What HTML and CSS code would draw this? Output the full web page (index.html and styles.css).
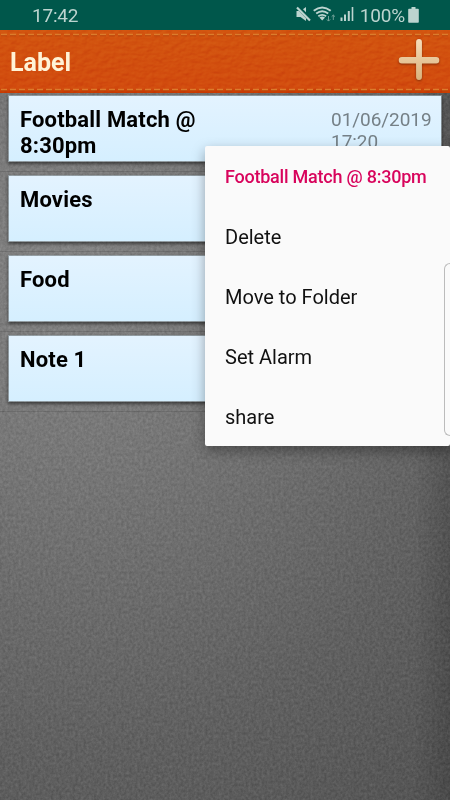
FILE: index.html
```html
<!DOCTYPE html>
<html lang="en">
<head>
<meta charset="utf-8">
<title>Label</title>
<link rel="stylesheet" href="styles.css">
</head>
<body>
<div class="screen">
  <svg class="grain" width="450" height="710" aria-hidden="true">
    <filter id="felt" x="0" y="0" width="100%" height="100%" color-interpolation-filters="sRGB">
      <feTurbulence type="fractalNoise" baseFrequency="0.37 0.33" numOctaves="3" seed="4"/>
      <feColorMatrix values="1.3 0 0 0 -.2  1.3 0 0 0 -.2  1.3 0 0 0 -.2  0 0 0 0 .1"/>
    </filter>
    <rect width="450" height="710" filter="url(#felt)"/>
  </svg>
  <div class="status">
    <span class="clock">17:42</span>
    <svg class="status-icons" width="60" height="20" viewBox="0 0 60 20">
      <g fill="#bcd4cf">
        <path d="M0.500 6h4l5.500-4v14l-5.500-4h-4z"/>
        <path d="M44.500 12.500h2v3.500h-2zM48 9.500h2v6.500h-2zM51.800 6h2v10h-2zM55.700 2h1.600v14h-1.600z"/>
        <path d="M26.200 15.500l-2.800-3q2.800-1.800 5.600 0z"/>
      </g>
      <path d="M2 2L14.500 15" stroke="#00574b" stroke-width="4"/>
      <path d="M1 2.500L14 15.500" stroke="#bcd4cf" stroke-width="2.200"/>
      <g fill="none" stroke="#bcd4cf" stroke-width="1.900">
        <path d="M17.700 5.800q8.500-6.800 17 0M20.200 8.600q6-4.600 12 0M22.300 11.300q3.900-2.800 7.800 0"/>
      </g>
      <path d="M32.500 11v5m-1.700-1.600l1.700 1.700 1.700-1.700M37.300 15v-5m-1.700 1.700l1.700-1.700 1.700 1.700" fill="none" stroke="#6fa198" stroke-width="1"/>
    </svg>
    <span class="percent">100%</span>
    <svg class="battery" width="12" height="16" viewBox="0 0 12 16"><path d="M3.500 0h4v1.800H10q.8 0 .8.800V15q0 .8-.8.800H1q-.8 0-.8-.8V2.600q0-.8.8-.8h2.500z" fill="#bcd4cf"/></svg>
  </div>
  <header class="bar">
    <svg class="leather" width="450" height="63" aria-hidden="true">
      <filter id="hide" x="0" y="0" width="100%" height="100%" color-interpolation-filters="sRGB">
        <feTurbulence type="fractalNoise" baseFrequency="0.15 0.22" numOctaves="3" seed="9" result="n"/>
        <feDiffuseLighting in="n" surfaceScale="1.200" diffuseConstant=".66" lighting-color="#fff"><feDistantLight azimuth="240" elevation="50"/></feDiffuseLighting>
      </filter>
      <rect width="450" height="63" filter="url(#hide)" class="hide-fill"/>
      <path class="stitch-shade" d="M1 5.500H450M1 60.500H450"/>
      <path class="stitch" d="M1 4.500H450M1 59.500H450"/>
    </svg>
    <h1 class="title">Label</h1>
    <svg class="plus" width="43" height="43" viewBox="0 0 44 44">
      <defs><linearGradient id="cream" x1="0" y1="0" x2="0" y2="1"><stop offset="0" stop-color="#f6ddba"/><stop offset="1" stop-color="#d9b27c"/></linearGradient></defs>
      <path d="M21.500 1a3 3 0 0 1 3 3v15.500H39a3 3 0 0 1 0 6.500H24.500v14a3 3 0 0 1-6 0V26H4a3 3 0 0 1 0-6.500h14.500V4a3 3 0 0 1 3-3z" fill="url(#cream)"/>
    </svg>
  </header>
  <main class="list">
    <div class="row"><article class="note"><h2>Football Match @ 8:30pm</h2><time>01/06/2019 17:20</time></article></div>
    <div class="row"><article class="note"><h2>Movies</h2></article></div>
    <div class="row"><article class="note"><h2>Food</h2></article></div>
    <div class="row"><article class="note"><h2>Note 1</h2></article></div>
  </main>
  <div class="menu">
    <div class="item heading">Football Match @ 8:30pm</div>
    <div class="item">Delete</div>
    <div class="item">Move to Folder</div>
    <div class="item">Set Alarm</div>
    <div class="item">share</div>
    <div class="handle"></div>
  </div>
</div>
</body>
</html>
```

FILE: styles.css
```css
* { box-sizing: border-box; }
body { margin: 0; font-family: Roboto, sans-serif; }
.screen {
  position: relative;
  width: 450px;
  height: 800px;
  overflow: hidden;
  background:
    linear-gradient(90deg, transparent 92%, rgba(0,0,0,.16)),
    radial-gradient(ellipse 570px 640px at 70px 270px, #858585 0%, #777 30%, #5e5e5e 75%, #535353 100%);
}
.grain { position: absolute; left: 0; top: 90px; }
.status {
  position: relative;
  display: flex;
  align-items: center;
  height: 30px;
  padding: 0 31px 0 32px;
  background: #00574b;
  color: #bcd4cf;
  font-size: 19px;
}
.clock { flex: 1; letter-spacing: -.2px; }
.status-icons { margin: 0 4px 0 0; }
.percent { letter-spacing: -.2px; margin-right: 3px; }
.battery { margin-right: -1px; }
.bar {
  position: relative;
  display: flex;
  align-items: center;
  justify-content: space-between;
  height: 63px;
  padding: 0 9px 0 10px;
  background: linear-gradient(#d2540f, #d24b0e 92%, #c83900);
}
.leather { position: absolute; left: 0; top: 0; }
.hide-fill { mix-blend-mode: soft-light; opacity: .45; }
.stitch, .stitch-shade { fill: none; stroke-dasharray: 6 3; stroke-width: 1.6; }
.stitch { stroke: #dc7c2c; }
.stitch-shade { stroke: #b84208; }
.title { position: relative; margin: 3px 0 0; color: #fff3d6; font-size: 25px; line-height: 30px; font-weight: 700; }
.plus { position: relative; margin-top: -5px; filter: drop-shadow(0 1px 1px rgba(80,20,0,.6)); }
.list { position: relative; }
.row { height: 80px; padding: 2px 8px 0 8px; border-bottom: 1px solid transparent; background: linear-gradient(rgba(0,0,0,.12), rgba(0,0,0,.12)) 0 78px / 100% 1px no-repeat; }
.note {
  display: flex;
  justify-content: space-between;
  height: 67px;
  padding: 11px 11px 0 11px;
  overflow: hidden;
  border: 1px solid rgba(165,185,195,.5);
  background: linear-gradient(#e3f3ff, #d5efff) padding-box;
  box-shadow: 0 2px 3px rgba(0,0,0,.5);
}
.note h2 { margin: 0; width: 200px; font-size: 22px; line-height: 26px; font-weight: 700; letter-spacing: .17px; }
.note time { width: 99px; padding-top: 2px; font-size: 19px; line-height: 22px; color: #758087; letter-spacing: -.05px; }
.menu {
  position: absolute;
  left: 205px;
  top: 146px;
  width: 245px;
  height: 300px;
  background: #fafafa;
  border-radius: 2px;
  box-shadow: 0 5px 13px rgba(0,0,0,.35);
}
.item { height: 60px; padding: 1px 0 0 20px; line-height: 60px; font-size: 20px; color: #111; white-space: nowrap; }
.heading { font-size: 18px; font-weight: 500; color: #d8045c; letter-spacing: -.23px; }
.handle {
  position: absolute;
  left: 239px;
  top: 117px;
  width: 6px;
  height: 173px;
  border: 1px solid #bbb;
  border-right: 0;
  border-radius: 7px 0 0 7px;
}
```
